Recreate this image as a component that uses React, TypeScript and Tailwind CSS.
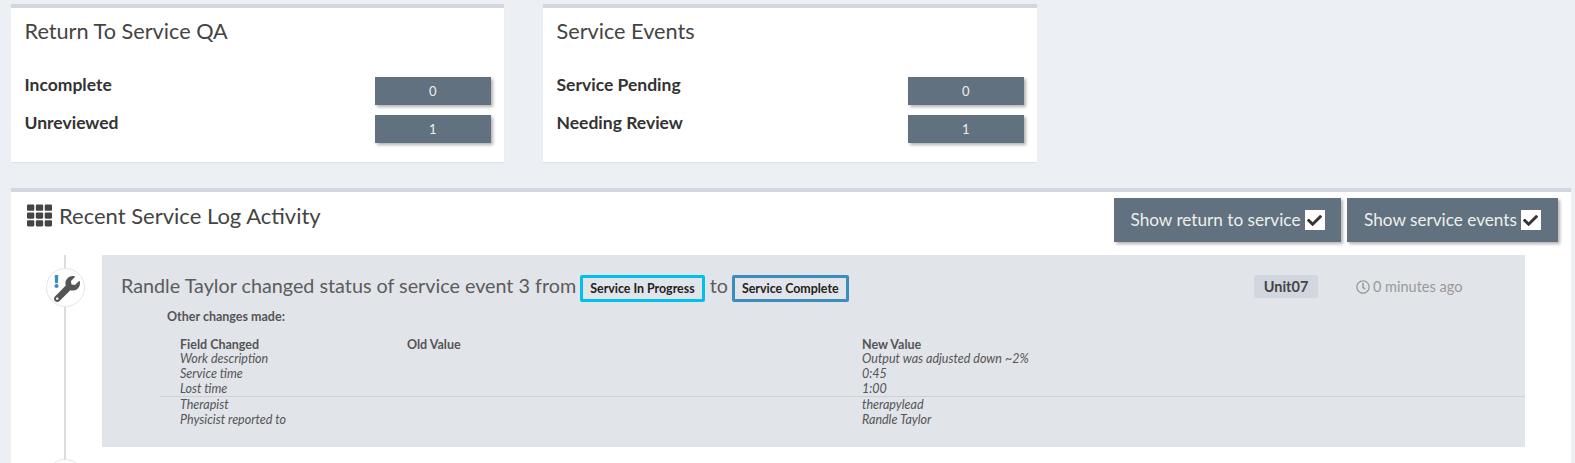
import { FaCheck, FaExclamation, FaRegClock, FaTh, FaWrench } from 'react-icons/fa';

const FONT = 'font-["Lato","Noto_Sans",sans-serif]';

type Stat = { label: string; value: number };

const StatCard = ({ title, stats, width }: { title: string; stats: Stat[]; width: string }) => (
	<div className={`${width} h-[158px] bg-white border-t-4 border-[#d2d6de] shadow-[0_1px_1px_rgba(0,0,0,0.05)] pl-[13.5px] pr-[13px]`}>
		<h3 className="text-[21.7px] leading-[24px] mt-[11px] text-[#444]">{title}</h3>
		<div className="mt-[34px] flex flex-col gap-[10px]">
			{stats.map(({ label, value }) => (
				<div key={label} className="flex justify-between">
					<span className="text-[17.5px] leading-[20px] -mt-[2px] font-bold text-[#333]">{label}</span>
					<span className="w-[116.5px] h-[28px] bg-[#62717f] text-[#eee] text-[13px] leading-[28px] text-center shadow-[2px_2px_3px_rgba(0,0,0,0.3)]">
						{value}
					</span>
				</div>
			))}
		</div>
	</div>
);

const ToggleButton = ({ label, width }: { label: string; width: string }) => (
	<div className={`${width} h-[44px] bg-[#62717f] text-[#eee] text-[17.2px] flex items-center justify-center gap-[4px] shadow-[2px_2px_3px_rgba(0,0,0,0.3)]`}>
		{label}
		<span className="w-[20px] h-[20px] bg-white flex items-center justify-center text-[#333] text-[15px]">
			<FaCheck />
		</span>
	</div>
);

const StatusBadge = ({ label, border }: { label: string; border: string }) => (
	<span className={`inline-block h-[27px] px-[7px] -ml-[1px] border-[3px] rounded-[2px] ${border} text-[12.4px] leading-[21px] font-bold text-[#222] align-middle mt-[1px]`}>
		{label}
	</span>
);

const CHANGES = [
	{ field: 'Work description', value: 'Output was adjusted down ~2%' },
	{ field: 'Service time', value: '0:45' },
	{ field: 'Lost time', value: '1:00' },
	{ field: 'Therapist', value: 'therapylead' },
	{ field: 'Physicist reported to', value: 'Randle Taylor' },
];

const App = () => {
	return (
		<div className={`h-[463px] overflow-hidden bg-[#ecf0f5] ${FONT}`}>
			<div className="flex gap-[39px] pl-[11px] pt-[4px]">
				<StatCard
					width="w-[493px]"
					title="Return To Service QA"
					stats={[
						{ label: 'Incomplete', value: 0 },
						{ label: 'Unreviewed', value: 1 },
					]}
				/>
				<StatCard
					width="w-[494px]"
					title="Service Events"
					stats={[
						{ label: 'Service Pending', value: 0 },
						{ label: 'Needing Review', value: 1 },
					]}
				/>
			</div>

			<div className="mt-[26px] ml-[11px] mr-[4px] h-[275px] bg-white border-t-4 border-[#d2d6de]">
				<div className="flex justify-between pl-[16px] pr-[13px] pt-[6px]">
					<h3 className="flex items-center gap-[7px] h-[28px] mt-[3px] text-[22px] text-[#444]">
						<FaTh className="text-[25px] text-[#444]" />
						Recent Service Log Activity
					</h3>
					<div className="flex gap-[6px]">
						<ToggleButton label="Show return to service" width="w-[227px]" />
						<ToggleButton label="Show service events" width="w-[211px]" />
					</div>
				</div>

				<div className="flex mt-[13px]">
					<div className="relative w-[91px] shrink-0 h-[210px]">
						<div className="absolute left-[53px] top-0 bottom-0 w-[2px] bg-[#d9dce0]" />
						<div className="absolute left-[35px] top-[13px] w-[39px] h-[39px] rounded-full bg-white border border-[#e3e5e8] flex items-center justify-center">
							<FaWrench className="text-[26px] text-[#555] ml-[3px] mt-[3px]" />
							<FaExclamation className="absolute left-[3px] top-[6px] text-[13px] text-[#3c8dbc]" />
						</div>
						<div className="absolute left-[35px] top-[204px] w-[39px] h-[39px] rounded-full bg-white border border-[#e3e5e8]" />
					</div>

					<div className="w-[1423px] h-[192px] bg-[#e1e4e9] text-[#555]">
						<div className="flex items-start">
							<p className="w-[1152px] pl-[19px] pt-[17px] text-[19.75px] leading-[27px] text-[#5c5c5c] whitespace-nowrap">
								Randle Taylor changed status of service event 3 from{' '}
								<StatusBadge label="Service In Progress" border="border-[#00c0ef]" /> to{' '}
								<StatusBadge label="Service Complete" border="border-[#3c8dbc]" />
							</p>
							<span className="mt-[20px] w-[64px] h-[23px] rounded-[2px] bg-[#d2d6de] text-center text-[14.5px] leading-[23px] font-bold text-[#444]">
								Unit07
							</span>
							<span className="ml-[38px] mt-[20px] flex items-center gap-[3px] text-[14.5px] leading-[23px] text-[#999]">
								<FaRegClock className="text-[14px]" />0 minutes ago
							</span>
						</div>

						<p className="ml-[65px] mt-[7px] text-[12.5px] leading-[16px] font-bold">Other changes made:</p>

						<div className="ml-[58px] mt-[12px] text-[12.5px] leading-[15px]">
							<div className="grid grid-cols-[227px_455px_1fr] pl-[20px] h-[14px] font-bold">
								<span>Field Changed</span>
								<span>Old Value</span>
								<span>New Value</span>
							</div>
							{CHANGES.map(({ field, value }) => (
								<div
									key={field}
									className={`grid grid-cols-[227px_455px_1fr] pl-[20px] italic ${field === 'Therapist' ? 'border-t border-[#cdd0d6]' : ''}`}
								>
									<span>{field}</span>
									<span />
									<span>{value}</span>
								</div>
							))}
						</div>
					</div>
				</div>
			</div>
		</div>
	);
};

export default App;
